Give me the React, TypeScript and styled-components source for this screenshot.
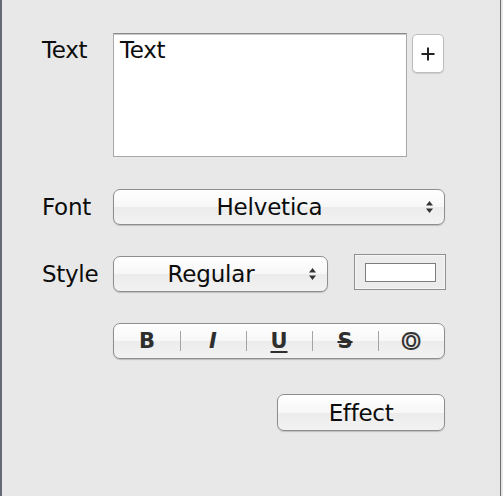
import React from 'react'
import styled, { createGlobalStyle } from 'styled-components'

const GlobalStyle = createGlobalStyle`
	html, body {
		margin: 0;
		padding: 0;
		background: #e8e8e8;
	}
	body {
		font-family: 'DejaVu Sans', 'Liberation Sans', sans-serif;
		color: #111;
	}
`

const Panel = styled.div`
	box-sizing: border-box;
	width: 501px;
	height: 496px;
	background: #e8e8e8;
	border-left: 2px solid #646b74;
	border-right: 1px solid #6c6c6c;
	padding: 33px 0 0 40px;
	display: flex;
	flex-direction: column;
`

interface RowProps {
	top?: number
}
const Row = styled.div<RowProps>`
	display: flex;
	align-items: center;
	margin-top: ${props => props.top || 0}px;
`

interface LabelProps {
	alignTop?: boolean
}
const Label = styled.div<LabelProps>`
	width: 71px;
	font-size: 23px;
	line-height: 27px;
	letter-spacing: -0.3px;
	color: #0c0c0c;
	align-self: ${props => (props.alignTop ? 'flex-start' : 'center')};
	padding-top: ${props => (props.alignTop ? '4px' : '0')};
`

const TextBox = styled.textarea`
	box-sizing: border-box;
	width: 294px;
	height: 124px;
	margin: 0;
	resize: none;
	border: 1px solid #a9a9a9;
	border-top-color: #8a8a8a;
	box-shadow: inset 0 1px 0 #c8c8c8;
	background: #fff;
	padding: 3px 6px;
	font-family: 'DejaVu Sans', 'Liberation Sans', sans-serif;
	font-size: 23px;
	line-height: 27px;
	letter-spacing: -0.3px;
	color: #0c0c0c;
	outline: none;
`

const PlusButton = styled.div`
	box-sizing: border-box;
	width: 32px;
	height: 39px;
	margin-left: 5px;
	align-self: flex-start;
	margin-top: 1px;
	background: #fff;
	border: 1px solid #bdbdbd;
	border-radius: 5px;
	box-shadow: 0 1px 1px rgba(0, 0, 0, 0.12);
	display: flex;
	align-items: center;
	justify-content: center;
`

interface WidthProps {
	w: number
}
const PopUp = styled.div<WidthProps>`
	box-sizing: border-box;
	width: ${props => props.w}px;
	height: 36px;
	border: 1px solid #8e8e8e;
	border-radius: 7px;
	background: linear-gradient(#ffffff 0%, #f7f7f7 50%, #ececec 51%, #f2f2f2 100%);
	box-shadow: 0 1px 1px rgba(0, 0, 0, 0.18);
	display: flex;
	align-items: center;
	padding-right: 10px;
	font-size: 23px;
	letter-spacing: -0.2px;
	color: #0c0c0c;
`

const PopUpText = styled.span`
	flex: 1;
	text-align: center;
`

const ColorWell = styled.div`
	box-sizing: border-box;
	width: 92px;
	height: 36px;
	margin-left: 26px;
	margin-top: -4px;
	border: 1px solid #8f8f8f;
	background: #ececec;
	box-shadow: inset 0 0 0 1px #f6f6f6;
	display: flex;
	align-items: center;
	justify-content: center;
`

const WellSwatch = styled.div`
	box-sizing: border-box;
	width: 71px;
	height: 19px;
	background: #fff;
	border: 1px solid #7d7d7d;
`

const Segmented = styled.div`
	box-sizing: border-box;
	width: 332px;
	height: 36px;
	border: 1px solid #8e8e8e;
	border-radius: 7px;
	background: linear-gradient(#ffffff 0%, #f7f7f7 50%, #ececec 51%, #f2f2f2 100%);
	box-shadow: 0 1px 1px rgba(0, 0, 0, 0.18);
	display: flex;
	overflow: hidden;
`

interface SegmentProps {
	kind: 'bold' | 'italic' | 'underline' | 'strike' | 'outline'
}
const Segment = styled.div<SegmentProps>`
	flex: 1;
	position: relative;
	display: flex;
	align-items: center;
	justify-content: center;
	font-family: 'DejaVu Sans', sans-serif;
	font-size: ${props => (props.kind === 'outline' ? '22px' : '21px')};
	font-weight: bold;
	font-style: ${props => (props.kind === 'italic' ? 'italic' : 'normal')};
	text-decoration: ${props =>
		props.kind === 'underline' ? 'underline' : props.kind === 'strike' ? 'line-through' : 'none'};
	text-decoration-thickness: 2px;
	text-underline-offset: 3px;
	color: ${props => (props.kind === 'outline' ? '#e6e6e6' : '#2e2e2e')};
	-webkit-text-stroke: ${props => (props.kind === 'outline' ? '2px #333' : '0')};

	&:not(:first-child)::before {
		content: '';
		position: absolute;
		left: 0;
		top: 7px;
		bottom: 7px;
		width: 1px;
		background: #a4a4a4;
	}
`

const EffectButton = styled.div`
	box-sizing: border-box;
	width: 168px;
	height: 37px;
	margin-left: auto;
	margin-right: 55px;
	border: 1px solid #8e8e8e;
	border-radius: 7px;
	background: linear-gradient(#ffffff 0%, #f7f7f7 50%, #ececec 51%, #f2f2f2 100%);
	box-shadow: 0 1px 1px rgba(0, 0, 0, 0.18);
	display: flex;
	align-items: center;
	justify-content: center;
	font-size: 23px;
	letter-spacing: -0.3px;
	color: #0c0c0c;
`

const Arrows = () => (
	<svg width="9" height="14" viewBox="0 0 9 14">
		<polygon points="1,5.5 4.5,1 8,5.5" fill="#333" />
		<polygon points="1,8.5 4.5,13 8,8.5" fill="#333" />
	</svg>
)

const Plus = () => (
	<svg width="14" height="14" viewBox="0 0 14 14">
		<path d="M7 0.5V13.5M0.5 7H13.5" stroke="#222" strokeWidth="2" />
	</svg>
)

export default function App() {
	return (
		<>
			<GlobalStyle />
			<Panel>
				<Row>
					<Label alignTop>{'Text'}</Label>
					<TextBox readOnly defaultValue={'Text'} />
					<PlusButton>
						<Plus />
					</PlusButton>
				</Row>
				<Row top={32}>
					<Label>{'Font'}</Label>
					<PopUp w={332}>
						<PopUpText>{'Helvetica'}</PopUpText>
						<Arrows />
					</PopUp>
				</Row>
				<Row top={31}>
					<Label>{'Style'}</Label>
					<PopUp w={215}>
						<PopUpText>{'Regular'}</PopUpText>
						<Arrows />
					</PopUp>
					<ColorWell>
						<WellSwatch />
					</ColorWell>
				</Row>
				<Row top={31}>
					<Label />
					<Segmented>
						<Segment kind="bold">B</Segment>
						<Segment kind="italic">I</Segment>
						<Segment kind="underline">U</Segment>
						<Segment kind="strike">S</Segment>
						<Segment kind="outline">O</Segment>
					</Segmented>
				</Row>
				<Row top={35}>
					<EffectButton>{'Effect'}</EffectButton>
				</Row>
			</Panel>
		</>
	)
}
